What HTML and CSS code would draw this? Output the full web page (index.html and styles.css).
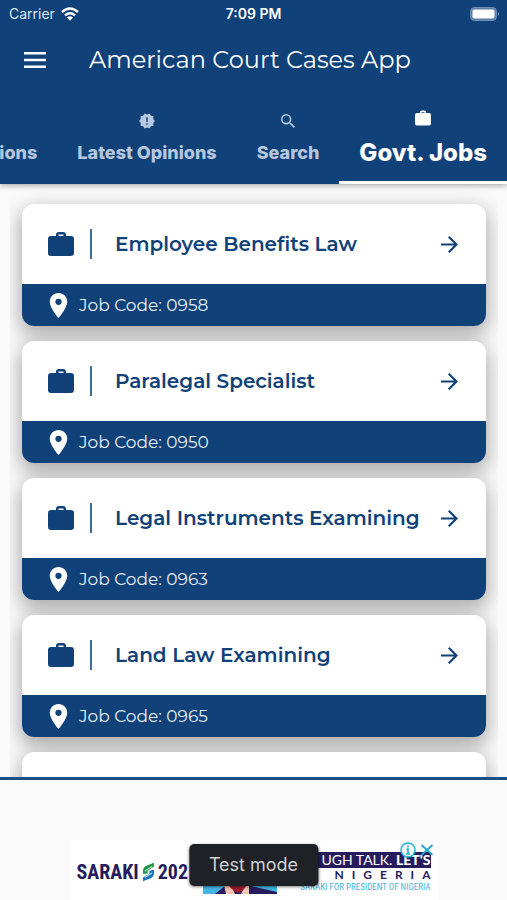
FILE: index.html
```html
<!DOCTYPE html>
<html lang="en">
<head>
<meta charset="utf-8">
<meta name="viewport" content="width=device-width, initial-scale=1">
<title>American Court Cases App</title>
<link rel="stylesheet" href="styles.css">
</head>
<body>
<svg class="defs" aria-hidden="true">
  <symbol id="bag" viewBox="0 0 26 24"><path fill-rule="evenodd" d="M3 4h5V3Q8 0 11 0h4q3 0 3 3v1h5q3 0 3 3v14q0 3-3 3H3q-3 0-3-3V7q0-3 3-3zm7.500 0h5V2.500h-5z"/></symbol>
  <symbol id="pin" viewBox="5 2 14 20"><path d="M12 2C8.130 2 5 5.130 5 9c0 5.250 7 13 7 13s7-7.750 7-13c0-3.870-3.130-7-7-7zm0 9.500a2.500 2.500 0 1 1 0-5 2.500 2.500 0 0 1 0 5z"/></symbol>
  <symbol id="arrow" viewBox="4 4 16 16"><path d="M12 4l-1.410 1.410L16.170 11H4v2h12.170l-5.580 5.590L12 20l8-8z"/></symbol>
</svg>
<div class="app">
  <header class="header">
    <div class="status">
      <span class="carrier">Carrier
        <svg class="wifi" viewBox="0 0 18 14"><g fill="none" stroke="#fff" stroke-width="2.400"><path d="M1 5Q9-2 17 5"/><path d="M4 8.300Q9 4 14 8.300"/></g><path fill="#fff" d="M6 10.500q3-2.400 6 0L9 13.800z"/></svg>
      </span>
      <span class="time">7:09 PM</span>
      <svg class="battery" viewBox="0 0 30 14"><rect x=".5" y=".5" width="26" height="13" rx="4" fill="#5c7fa8" stroke="#7090b5"/><rect x="2.500" y="2.500" width="22" height="9" rx="2" fill="#fff"/><path d="M28 5q2 2 0 4z" fill="#8ba4c2"/></svg>
    </div>
    <div class="bar">
      <button class="menu" aria-label="Menu"><svg viewBox="0 0 22 16"><path fill="#fff" d="M0 0h22v2.600H0zM0 6.700h22v2.600H0zM0 13.400h22V16H0z"/></svg></button>
      <h1>American Court Cases App</h1>
    </div>
    <nav class="tabs">
      <a class="tab" href="#opinions"><span>Opinions</span></a>
      <a class="tab" href="#latest">
        <svg class="tab-icon" viewBox="1 1 22 22"><path fill-rule="evenodd" d="M23 12l-2.440-2.780.34-3.680-3.610-.82-1.890-3.180L12 3 8.600 1.540 6.710 4.720l-3.610.81.34 3.680L1 12l2.440 2.780-.34 3.690 3.610.82 1.890 3.180L12 21l3.400 1.460 1.890-3.180 3.610-.82-.34-3.680zM11 7h2v6h-2zm0 8h2v2h-2z"/></svg>
        <span>Latest Opinions</span>
      </a>
      <a class="tab" href="#search">
        <svg class="tab-icon small" viewBox="3 3 17.500 17.500"><path d="M15.500 14h-.79l-.28-.27A6.470 6.470 0 0 0 16 9.500 6.500 6.500 0 1 0 9.500 16c1.610 0 3.090-.59 4.230-1.570l.27.28v.79l5 4.990L20.490 19zm-6 0a4.500 4.500 0 1 1 0-9 4.500 4.500 0 0 1 0 9z"/></svg>
        <span>Search</span>
      </a>
      <a class="tab active" href="#jobs" aria-current="page">
        <svg class="tab-icon"><use href="#bag"/></svg>
        <span>Govt. Jobs</span>
      </a>
    </nav>
  </header>

  <main class="list">
    <a class="card" href="#0958">
      <div class="top"><svg class="bag"><use href="#bag"/></svg><i class="rule"></i><h2>Employee Benefits Law</h2><svg class="arrow"><use href="#arrow"/></svg></div>
      <div class="code"><svg class="pin"><use href="#pin"/></svg><span>Job Code: 0958</span></div>
    </a>
    <a class="card" href="#0950">
      <div class="top"><svg class="bag"><use href="#bag"/></svg><i class="rule"></i><h2>Paralegal Specialist</h2><svg class="arrow"><use href="#arrow"/></svg></div>
      <div class="code"><svg class="pin"><use href="#pin"/></svg><span>Job Code: 0950</span></div>
    </a>
    <a class="card" href="#0963">
      <div class="top"><svg class="bag"><use href="#bag"/></svg><i class="rule"></i><h2>Legal Instruments Examining</h2><svg class="arrow"><use href="#arrow"/></svg></div>
      <div class="code"><svg class="pin"><use href="#pin"/></svg><span>Job Code: 0963</span></div>
    </a>
    <a class="card" href="#0965">
      <div class="top"><svg class="bag"><use href="#bag"/></svg><i class="rule"></i><h2>Land Law Examining</h2><svg class="arrow"><use href="#arrow"/></svg></div>
      <div class="code"><svg class="pin"><use href="#pin"/></svg><span>Job Code: 0965</span></div>
    </a>
    <div class="card">
      <div class="top"><svg class="bag"><use href="#bag"/></svg><i class="rule"></i></div>
    </div>
  </main>

  <footer class="footer">
    <div class="ad">
      <div class="brand"><span>SARAKI</span>
        <svg viewBox="0 0 12 20"><path fill="#1d9a49" d="M12 0v4L5 9v3L0 12V8q0-3 3-4.500z"/><path fill="#1673ba" d="M0 20v-4l7-4V8.500l5-1V12q0 3-3 4.500z"/><path stroke="#fff" d="M2 9l8-5M2 16l8-5"/></svg>
        <span>202</span></div>
      <svg class="figure" viewBox="0 10 74 44"><path fill="#45b5e3" d="M0 0h74v54H0z"/><path fill="#251b5d" d="M12 54l10-8h26l26 6v2z"/><path fill="#f3c5b2" d="M20 40h6l6 14h-9z"/><path fill="#f3c5b2" d="M42 46h4v8h-8z"/><path fill="#9c1b2e" d="M23 40h22q-1 9-10 13-9-4-12-13z"/></svg>
      <div class="slogan">
        <div class="line1">UGH TALK. <b>LET'S</b></div>
        <div class="line2">NIGERIA</div>
        <div class="line3">SARAKI FOR PRESIDENT OF NIGERIA</div>
      </div>
      <div class="choices">
        <button aria-label="Ad information"><svg viewBox="0 0 16 16"><circle cx="8" cy="8" r="7" fill="#fff" stroke="#20b0d0" stroke-width="1.500"/><path d="M8 3.500v2M6.500 7H8v5M6 12h4" fill="none" stroke="#20b0d0" stroke-width="1.700"/></svg></button>
        <button aria-label="Close ad"><svg viewBox="0 0 16 16"><path d="M2.500 3l11 10M13.500 3l-11 10" stroke="#20a5cb" stroke-width="1.800"/></svg></button>
      </div>
      <div class="toast" role="status">Test mode</div>
    </div>
  </footer>
</div>
</body>
</html>
```
FILE: styles.css
```css
:root {
  --navy: #104178;
  --display: Montserrat, "Noto Sans", sans-serif;
  --narrow: "Roboto Condensed", "Open Sans Condensed", "Liberation Sans", sans-serif;
}
* { box-sizing: border-box; }
body {
  margin: 0;
  background: #fafafa;
  font-family: Inter, sans-serif;
}
button { border: 0; padding: 0; background: none; cursor: pointer; }
a { color: inherit; text-decoration: none; }
svg { display: block; flex: none; }
.defs { display: none; }
.app {
  display: flex;
  flex-direction: column;
  height: 100vh;
  overflow: hidden;
}

.header {
  flex: none;
  position: relative;
  z-index: 1;
  background: var(--navy);
  color: #fff;
  box-shadow: 0 2px 5px rgba(0, 0, 0, .3);
}
.status {
  display: grid;
  grid-template-columns: 1fr auto 1fr;
  align-items: center;
  height: 27px;
  padding: 0 7px;
  font-size: 14px;
}
.carrier { display: flex; align-items: center; gap: 6px; padding-left: 2px; color: #dfe8f2; }
.wifi { width: 18px; height: 14px; }
.time { font-weight: 600; }
.battery { width: 30px; height: 14px; justify-self: end; }
.bar {
  display: flex;
  align-items: center;
  gap: 43px;
  height: 65px;
  padding: 0 24px;
}
.menu svg { width: 22px; height: 16px; }
h1 {
  margin: 0;
  font: 400 24px/32px var(--display);
  white-space: nowrap;
}
.tabs {
  display: flex;
  justify-content: flex-end;
  height: 92px;
  overflow: hidden;
}
.tab {
  flex: none;
  display: flex;
  flex-direction: column;
  align-items: center;
  justify-content: flex-end;
  gap: 12px;
  padding: 0 20px 19px;
  color: #b5c8df;
  font-weight: 800;
  font-size: 18px;
  line-height: 24px;
  white-space: nowrap;
}
.tab-icon { width: 16px; height: 16px; fill: currentColor; }
.tab-icon.small { width: 14px; height: 16px; }
.tab.active {
  padding-bottom: 13px;
  border-bottom: 3px solid #fff;
  color: #fff;
  font-size: 24px;
  line-height: 30px;
}

.list {
  flex: 1;
  min-height: 0;
  display: flex;
  flex-direction: column;
  gap: 15px;
  margin: 0 9px 0 10px;
  padding: 20px 12px 0;
  overflow: hidden;
}
.card {
  flex: none;
  border-radius: 12px;
  background: #fff;
  color: var(--navy);
  box-shadow: 0 7px 20px 2px rgba(0, 0, 0, .32);
}
.top {
  display: flex;
  align-items: center;
  height: 80px;
  padding: 0 28px 0 26px;
}
.bag { width: 26px; height: 24px; fill: var(--navy); }
.rule { width: 2px; height: 30px; margin: 0 23px 0 16px; background: #426a99; }
h2 {
  flex: 1;
  margin: 0;
  font: 600 20px/26px var(--display);
  white-space: nowrap;
}
.arrow { width: 17px; height: 17px; fill: var(--navy); }
.code {
  display: flex;
  align-items: center;
  gap: 11px;
  height: 42px;
  padding: 0 27px;
  border-radius: 0 0 12px 12px;
  background: var(--navy);
  color: #e8eff7;
  font: 400 17px/24px var(--display);
}
.pin { width: 19px; height: 25px; fill: #fff; }

.footer {
  flex: none;
  display: flex;
  flex-direction: column;
  align-items: center;
  padding-top: 60px;
  border-top: 3px solid #1b4d86;
  background: #fafafa;
}
.ad {
  position: relative;
  display: flex;
  align-items: flex-start;
  width: 368px;
  height: 60px;
  padding: 0 7px;
  background: #fff;
}
.brand {
  flex: 1;
  min-width: 0;
  display: flex;
  align-items: center;
  gap: 4px;
  padding-top: 20px;
  color: #251b5d;
  font: 700 20px/24px var(--narrow);
}
.brand svg { width: 11px; height: 20px; }
.figure { width: 74px; height: 44px; margin-top: 10px; }
.slogan {
  flex: none;
  width: 154px;
  padding-top: 12px;
  text-align: right;
  white-space: nowrap;
}
.line1 {
  background: #251b5d;
  color: #fff;
  font: 400 14px/16px Lato, sans-serif;
}
.line1 b { font-weight: 900; }
.line2 {
  margin-right: -8px;
  color: #251b5d;
  font: 700 12px/14px Lato, sans-serif;
  letter-spacing: 8px;
}
.line3 {
  color: #49b4df;
  font: 400 9px/10px var(--narrow);
}
.choices {
  position: absolute;
  top: 2px;
  right: 3px;
  display: flex;
  gap: 3px;
}
.choices svg { width: 16px; height: 16px; }
.toast {
  position: absolute;
  top: 4px;
  left: 50%;
  transform: translateX(-50%);
  padding: 9px 20px;
  border-radius: 5px;
  background: #1e2125;
  color: #cfd1d4;
  box-shadow: 0 1px 3px rgba(0, 0, 0, .5);
  font-size: 18px;
  line-height: 24px;
  white-space: nowrap;
}
```
